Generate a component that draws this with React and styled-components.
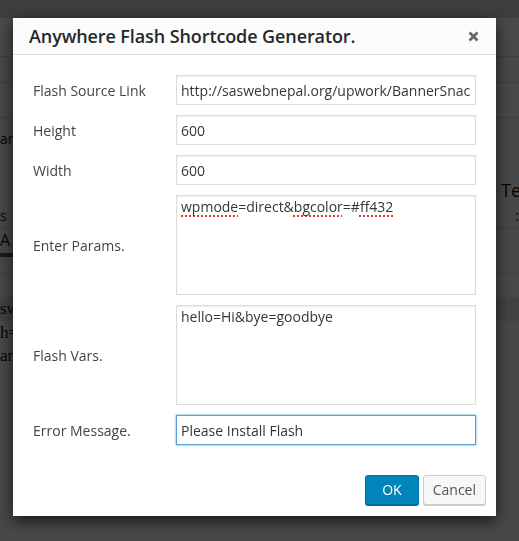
import { useEffect, useRef } from 'react';
import styled, { createGlobalStyle } from 'styled-components';

const GlobalStyle = createGlobalStyle`
  html, body {
    margin: 0;
    padding: 0;
    background: #f1f1f1;
  }
  * { box-sizing: border-box; }
`;

// ---------------------------------------------------------------------------
// page behind the modal (mostly hidden)
// ---------------------------------------------------------------------------

const BackPage = styled.div`
  width: 519px;
  height: 541px;
  overflow: hidden;
  font-family: "Open Sans", sans-serif;
  color: #111;
`;

const TopStrip = styled.div`
  height: 18px;
  background: #cdcdcd;
`;

const Band = styled.div`
  height: ${p => p.h}px;
  background: ${p => p.bg || '#f1f1f1'};
  border-bottom: ${p => (p.line ? '1px solid #d4d4d4' : 'none')};
  display: flex;
  justify-content: space-between;
  align-items: ${p => p.align || 'center'};
  font-family: ${p => (p.serif ? '"Liberation Serif", serif' : '"Open Sans", sans-serif')};
  font-size: ${p => (p.serif ? 17 : 14)}px;
`;

const Tab = styled.span`
  display: inline-block;
  padding-bottom: 2px;
  border-bottom: 4px solid #555;
  width: 13px;
  font-size: 16px;
`;

const Heading = styled.span`
  font-size: 18px;
  margin-right: -2px;
`;

// ---------------------------------------------------------------------------
// modal
// ---------------------------------------------------------------------------

const Overlay = styled.div`
  position: fixed;
  inset: 0;
  background: rgba(0, 0, 0, 0.7);
  padding: 18px 0 0 13px;
`;

const Dialog = styled.div`
  width: 483px;
  background: #fff;
  box-shadow: 0 5px 15px rgba(0, 0, 0, 0.7);
  font-family: "Open Sans", sans-serif;
  color: #444;
`;

const Header = styled.div`
  height: 37px;
  background: #fcfcfc;
  border-bottom: 1px solid #ddd;
  display: flex;
  align-items: center;
  justify-content: space-between;
  padding: 0 13px 0 16px;
`;

const Title = styled.h1`
  margin: 0;
  font-size: 18px;
  font-weight: 600;
  color: #23282d;
  letter-spacing: -0.1px;
`;

const CloseButton = styled.button`
  border: 0;
  background: none;
  padding: 0;
  width: 20px;
  height: 20px;
  display: flex;
  align-items: center;
  justify-content: center;
  cursor: pointer;
`;

const Form = styled.div`
  display: grid;
  grid-template-columns: 143px 300px;
  row-gap: 10px;
  align-items: center;
  padding: 20px 20px 30px 20px;
`;

const Label = styled.label`
  font-size: 14px;
  color: #444;
`;

const TextInput = styled.input`
  height: 30px;
  width: 100%;
  border: 1px solid ${p => (p.focused ? '#5b9dd9' : '#ddd')};
  box-shadow: ${p => (p.focused ? '0 0 2px rgba(30, 140, 190, 0.8)' : 'inset 0 1px 2px rgba(0, 0, 0, 0.07)')};
  padding: 0 4px;
  font-family: "Open Sans", sans-serif;
  font-size: 14px;
  color: #32373c;
  outline: none;
  border-radius: 0;
`;

const TextBox = styled.div`
  height: 100px;
  width: 100%;
  border: 1px solid #ddd;
  box-shadow: inset 0 1px 2px rgba(0, 0, 0, 0.07);
  padding: 1px 4px;
  font-size: 14px;
  line-height: 20px;
  color: #32373c;
  background: #fff;
`;

const Misspelled = styled.span`
  text-decoration: underline dotted #e33;
  text-decoration-thickness: 2px;
  text-underline-offset: 3px;
`;

const Footer = styled.div`
  display: flex;
  justify-content: flex-end;
  gap: 4px;
  padding: 0 10px 11px 0;
`;

const Button = styled.button`
  height: 30px;
  padding: 0 ${p => (p.primary ? 16 : 9)}px 2px;
  border-radius: 3px;
  font-family: "Open Sans", sans-serif;
  font-size: 14px;
  cursor: pointer;
  border: 1px solid ${p => (p.primary ? '#0073aa' : '#ccc')};
  background: ${p => (p.primary ? '#0085ba' : '#f7f7f7')};
  color: ${p => (p.primary ? '#fff' : '#555')};
  box-shadow: ${p => (p.primary ? '0 1px 0 #006799' : '0 1px 0 #ccc')};
`;

function CloseIcon() {
  return (
    <svg width="11" height="11" viewBox="0 0 11 11">
      <path d="M1.5 1.5 L9.5 9.5 M9.5 1.5 L1.5 9.5" stroke="#666" strokeWidth="2.6" strokeLinecap="butt" />
    </svg>
  );
}

export default function App() {
  const errRef = useRef(null);

  useEffect(() => {
    const el = errRef.current;
    if (el) {
      el.focus();
      el.setSelectionRange(el.value.length, el.value.length);
    }
  }, []);

  return (
    <>
      <GlobalStyle />
      <BackPage>
        <TopStrip />
        <Band h={39} bg="#f4f4f4" line />
        <Band h={26} bg="#f0f0f0" line />
        <Band h={35} bg="#f5f5f5" line />
        <Band h={40} align="center"><span>ar</span><span /></Band>
        <Band h={44} align="flex-end"><span /><Heading>Te</Heading></Band>
        <Band h={27} line><span>s</span><span>:</span></Band>
        <Band h={45} line align="flex-start"><Tab>A</Tab><span /></Band>
        <Band h={23} bg="#f4f4f4" />
        <Band h={24} bg="#dedede" serif><span>sw</span><span /></Band>
        <Band h={23} serif><span>h=</span><span /></Band>
        <Band h={23} serif><span>ar</span><span /></Band>
      </BackPage>

      <Overlay>
        <Dialog>
          <Header>
            <Title>Anywhere Flash Shortcode Generator.</Title>
            <CloseButton aria-label="Close"><CloseIcon /></CloseButton>
          </Header>

          <Form>
            <Label>Flash Source Link</Label>
            <TextInput defaultValue="http://saswebnepal.org/upwork/BannerSnack" />

            <Label>Height</Label>
            <TextInput defaultValue="600" />

            <Label>Width</Label>
            <TextInput defaultValue="600" />

            <Label>Enter Params.</Label>
            <TextBox role="textbox">
              <Misspelled>wpmode</Misspelled>=direct&amp;<Misspelled>bgcolor</Misspelled>=#<Misspelled>ff432</Misspelled>
            </TextBox>

            <Label>Flash Vars.</Label>
            <TextBox role="textbox">hello=Hi&amp;bye=goodbye</TextBox>

            <Label>Error Message.</Label>
            <TextInput ref={errRef} focused defaultValue="Please Install Flash" />
          </Form>

          <Footer>
            <Button primary>OK</Button>
            <Button>Cancel</Button>
          </Footer>
        </Dialog>
      </Overlay>
    </>
  );
}
